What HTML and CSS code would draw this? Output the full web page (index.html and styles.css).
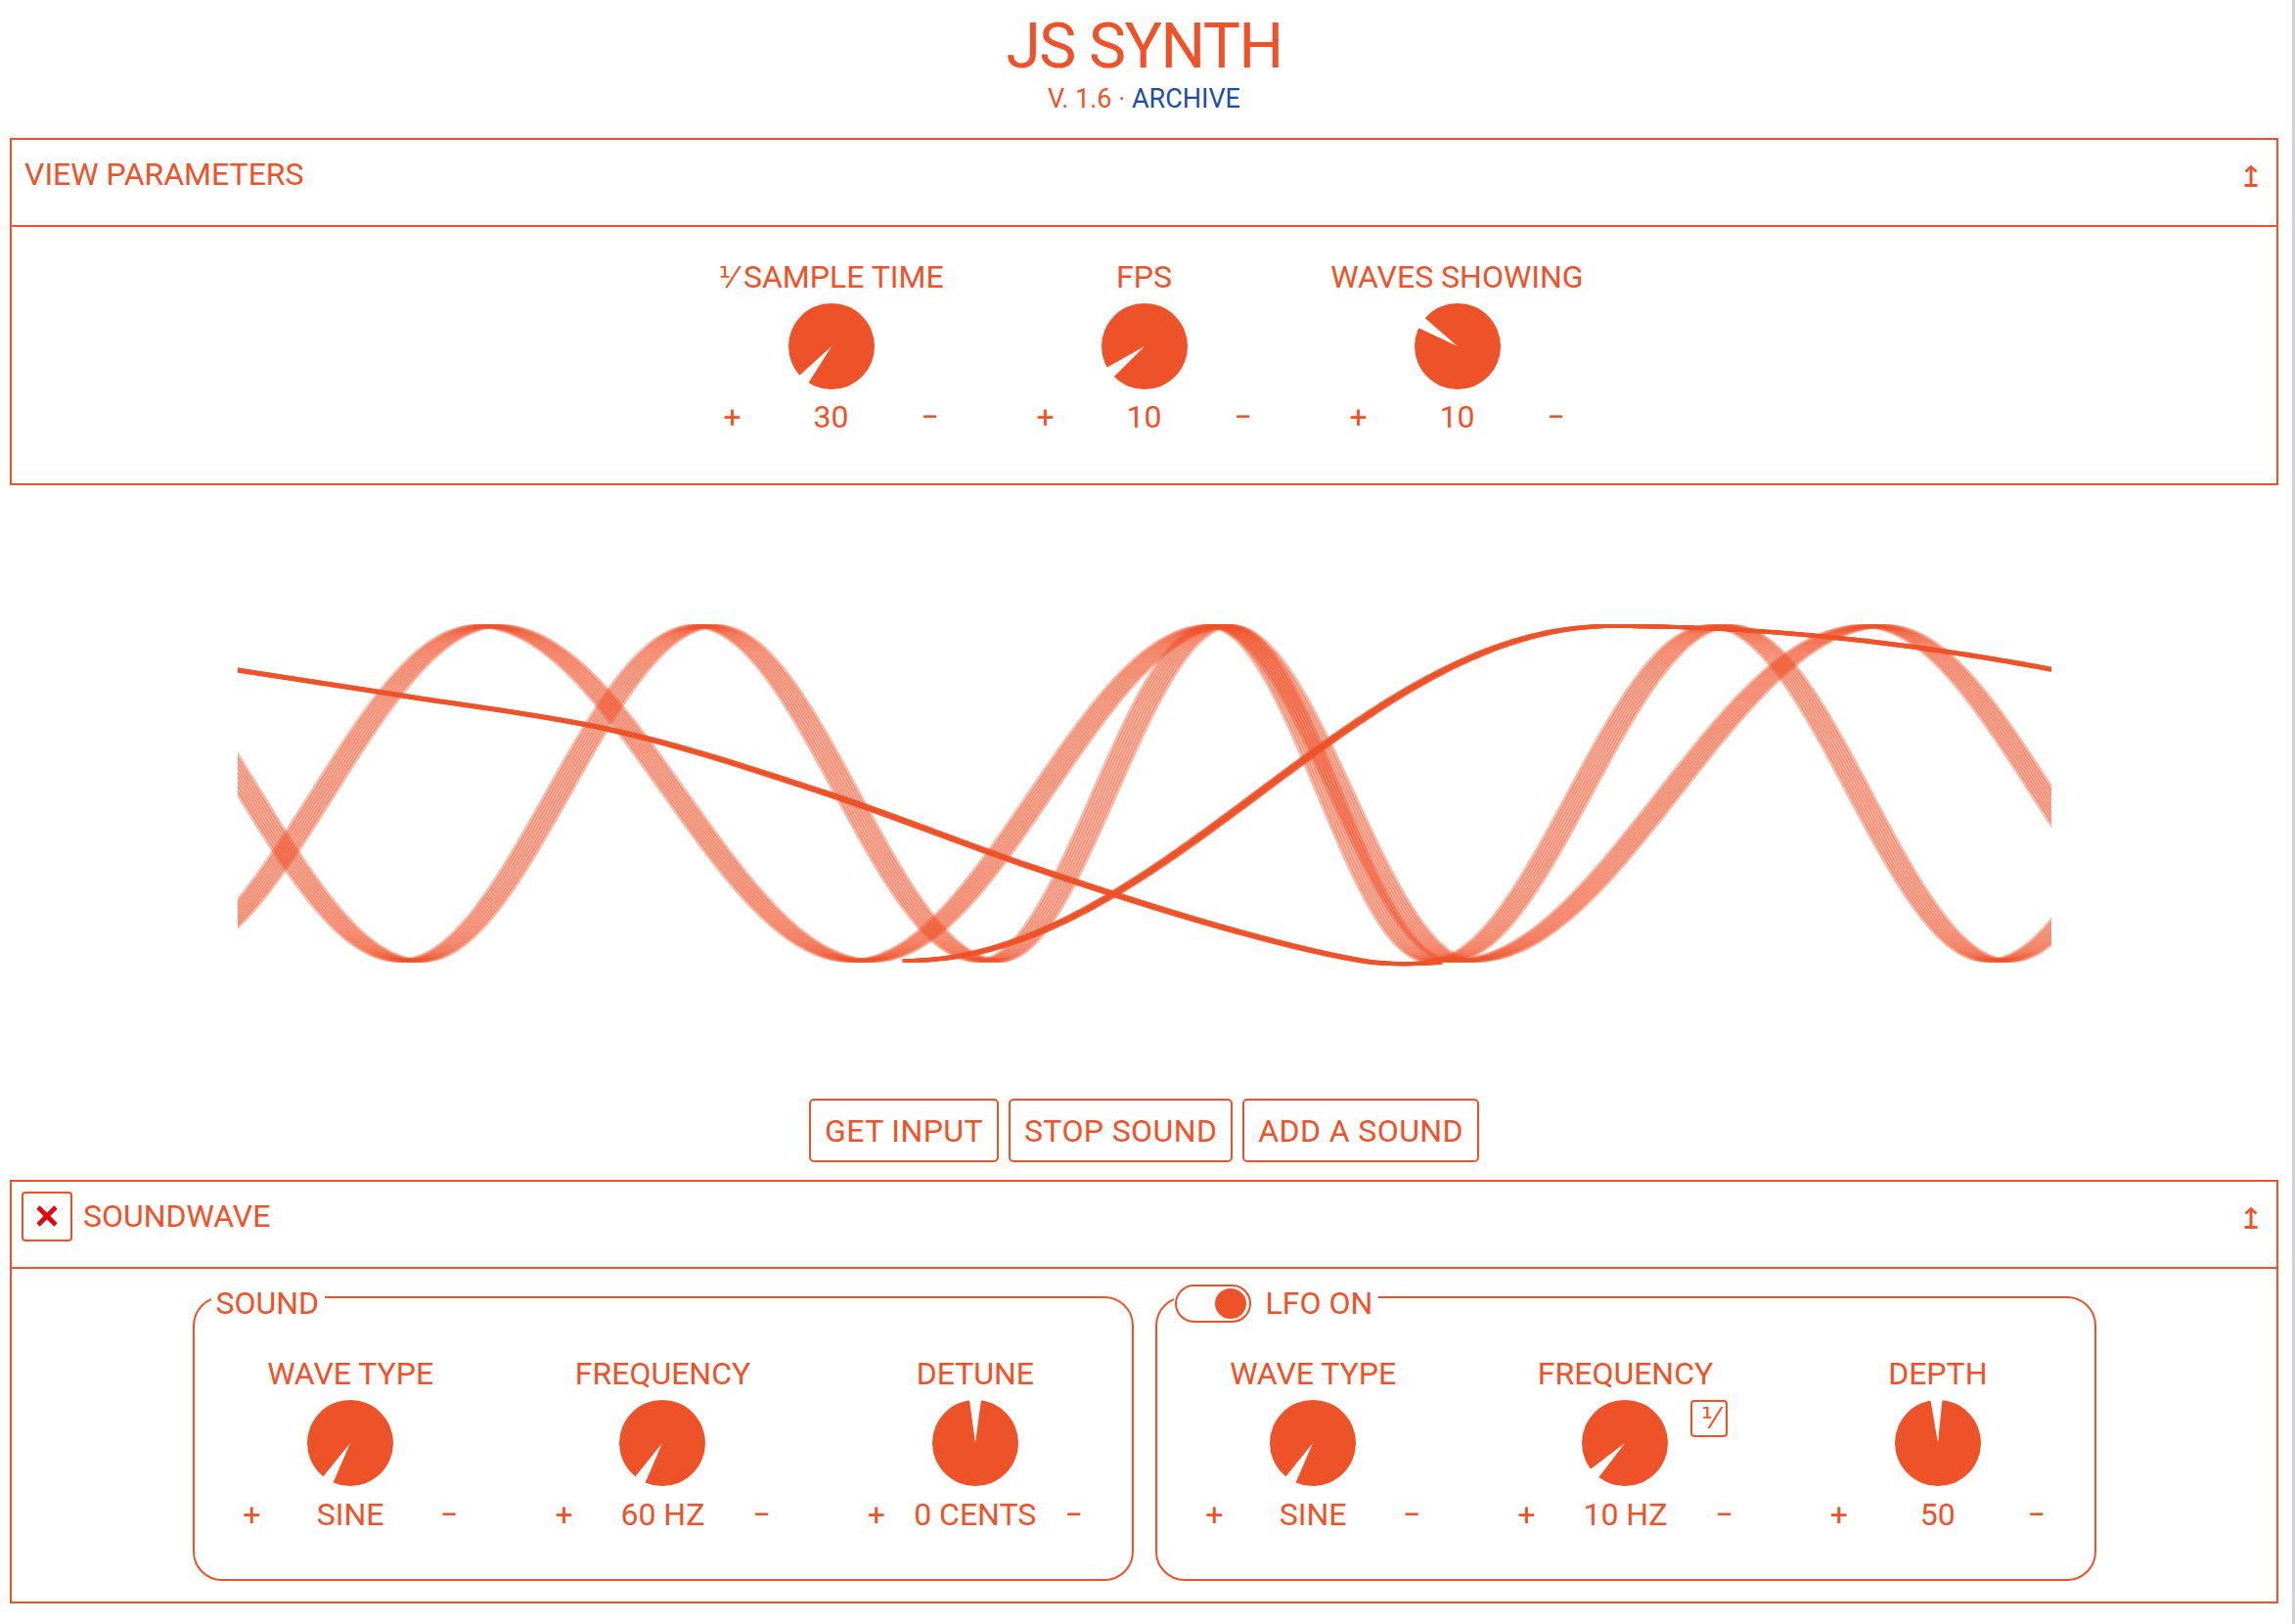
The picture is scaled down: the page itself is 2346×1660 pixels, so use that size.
FILE: index.html
```html
<!DOCTYPE html>
<html lang="en">
<head>
<meta charset="utf-8">
<title>JS Synth</title>
<link rel="stylesheet" href="styles.css">
</head>
<body>
<div class="scrollbar"></div>
<header class="top">
  <h1 class="title">JS SYNTH</h1>
  <p class="sub">V. 1.6 · <a class="link" href="#">ARCHIVE</a></p>
</header>

<section class="panel">
  <div class="panel-head">
    <h2 class="panel-title">VIEW PARAMETERS</h2>
    <svg class="collapse" width="14" height="22" viewBox="0 0 14 22"><path d="M1.5 6.5 L7 1.5 L12.5 6.5" fill="none" stroke="#EE5229" stroke-width="2.6"/><path d="M7 2 V19" stroke="#EE5229" stroke-width="3"/><path d="M0.5 20.5 H13.5" stroke="#EE5229" stroke-width="3"/></svg>
  </div>
  <div class="panel-body view-body">
    <div class="knobs">
      <div class="ctl">
        <div class="lbl"><span class="frac">⅟</span> SAMPLE TIME</div>
        <svg class="knob" width="88" height="88" viewBox="0 0 88 88"><circle cx="44" cy="44" r="44" fill="#EE5229"/><g transform="rotate(130 44 44)"><polygon points="44,44 110,35 110,53" fill="#fff"/></g></svg>
        <div class="row"><span>+</span><span>30</span><span>−</span></div>
      </div>
      <div class="ctl">
        <div class="lbl">FPS</div>
        <svg class="knob" width="88" height="88" viewBox="0 0 88 88"><circle cx="44" cy="44" r="44" fill="#EE5229"/><g transform="rotate(143 44 44)"><polygon points="44,44 110,35 110,53" fill="#fff"/></g></svg>
        <div class="row"><span>+</span><span>10</span><span>−</span></div>
      </div>
      <div class="ctl">
        <div class="lbl">WAVES SHOWING</div>
        <svg class="knob" width="88" height="88" viewBox="0 0 88 88"><circle cx="44" cy="44" r="44" fill="#EE5229"/><g transform="rotate(213 44 44)"><polygon points="44,44 110,35 110,53" fill="#fff"/></g></svg>
        <div class="row"><span>+</span><span>10</span><span>−</span></div>
      </div>
    </div>
  </div>
</section>

<div class="scope">
  <svg id="scope" class="scope-svg" width="1854" height="627" viewBox="242 495 1854 627"></svg>
</div>

<div class="actions">
  <button class="btn">GET INPUT</button>
  <button class="btn">STOP SOUND</button>
  <button class="btn">ADD A SOUND</button>
</div>

<section class="panel">
  <div class="panel-head">
    <button class="close" aria-label="remove"><svg width="22" height="22" viewBox="0 0 22 22"><path d="M2 2 L20 20 M20 2 L2 20" stroke="#E5000D" stroke-width="4.6"/></svg></button>
    <h2 class="panel-title">SOUNDWAVE</h2>
    <svg class="collapse" width="14" height="22" viewBox="0 0 14 22"><path d="M1.5 6.5 L7 1.5 L12.5 6.5" fill="none" stroke="#EE5229" stroke-width="2.6"/><path d="M7 2 V19" stroke="#EE5229" stroke-width="3"/><path d="M0.5 20.5 H13.5" stroke="#EE5229" stroke-width="3"/></svg>
  </div>
  <div class="panel-body sound-body">
    <fieldset class="group">
      <legend class="legend legend-sound"><span class="legend-text">SOUND</span></legend>
      <div class="trio">
        <div class="ctl">
          <div class="lbl">WAVE TYPE</div>
          <svg class="knob" width="88" height="88" viewBox="0 0 88 88"><circle cx="44" cy="44" r="44" fill="#EE5229"/><g transform="rotate(121 44 44)"><polygon points="44,44 110,35 110,53" fill="#fff"/></g></svg>
          <div class="row"><span>+</span><span>SINE</span><span>−</span></div>
        </div>
        <div class="ctl">
          <div class="lbl">FREQUENCY</div>
          <svg class="knob" width="88" height="88" viewBox="0 0 88 88"><circle cx="44" cy="44" r="44" fill="#EE5229"/><g transform="rotate(121 44 44)"><polygon points="44,44 110,35 110,53" fill="#fff"/></g></svg>
          <div class="row"><span>+</span><span>60 HZ</span><span>−</span></div>
        </div>
        <div class="ctl">
          <div class="lbl">DETUNE</div>
          <svg class="knob" width="88" height="88" viewBox="0 0 88 88"><circle cx="44" cy="44" r="44" fill="#EE5229"/><g transform="rotate(270 44 44)"><polygon points="44,44 110,35 110,53" fill="#fff"/></g></svg>
          <div class="row"><span>+</span><span>0 CENTS</span><span>−</span></div>
        </div>
      </div>
    </fieldset>
    <fieldset class="group">
      <legend class="legend legend-lfo"><span class="toggle"><span class="toggle-dot"></span></span><span class="legend-text">LFO ON</span></legend>
      <div class="trio">
        <div class="ctl">
          <div class="lbl">WAVE TYPE</div>
          <svg class="knob" width="88" height="88" viewBox="0 0 88 88"><circle cx="44" cy="44" r="44" fill="#EE5229"/><g transform="rotate(121 44 44)"><polygon points="44,44 110,35 110,53" fill="#fff"/></g></svg>
          <div class="row"><span>+</span><span>SINE</span><span>−</span></div>
        </div>
        <div class="ctl">
          <div class="lbl">FREQUENCY</div>
          <div class="knob-wrap">
            <svg class="knob" width="88" height="88" viewBox="0 0 88 88"><circle cx="44" cy="44" r="44" fill="#EE5229"/><g transform="rotate(135 44 44)"><polygon points="44,44 110,35 110,53" fill="#fff"/></g></svg>
            <button class="inv">⅟</button>
          </div>
          <div class="row"><span>+</span><span>10 HZ</span><span>−</span></div>
        </div>
        <div class="ctl">
          <div class="lbl">DEPTH</div>
          <svg class="knob" width="88" height="88" viewBox="0 0 88 88"><circle cx="44" cy="44" r="44" fill="#EE5229"/><g transform="rotate(268 44 44)"><polygon points="44,44 110,35 110,53" fill="#fff"/></g></svg>
          <div class="row"><span>+</span><span>50</span><span>−</span></div>
        </div>
      </div>
    </fieldset>
  </div>
</section>
<script src="script.js"></script>
</body>
</html>
```

FILE: styles.css
```css
html {
  overflow: hidden;
}
body {
  margin: 0;
  padding: 0 17px 0 10px;
  background: #fff;
  color: #EE5229;
  font-family: Roboto, "Liberation Sans", "DejaVu Sans", sans-serif;
  font-size: 32px;
  line-height: 38px;
}
.scrollbar {
  position: fixed;
  top: 0;
  right: 0;
  bottom: 0;
  width: 3px;
  background: #d2d2d6;
}
.top {
  text-align: center;
}
.title {
  margin: 16px 0 0;
  font-size: 64px;
  line-height: 64px;
  font-weight: 400;
  letter-spacing: -1.5px;
  color: #EF5229;
}
.sub {
  margin: 5px 0 0;
  font-size: 27px;
  line-height: 32px;
}
.link {
  color: #1C4EA0;
  text-decoration: none;
}
.panel {
  border: 2px solid #EE5229;
  margin-top: 24px;
}
.panel-head {
  height: 89px;
  box-sizing: border-box;
  padding: 0 19px 17px 13px;
  display: flex;
  align-items: center;
  border-bottom: 2px solid #EE5229;
}
.panel-title {
  margin: 0;
  font-size: 32px;
  font-weight: 400;
  line-height: 38px;
  flex: 1;
}
.collapse {
  display: block;
  margin-top: 4px;
}
.close {
  width: 52px;
  height: 51px;
  margin: 0 11px 0 -3px;
  padding: 0;
  border: 2px solid #EE5229;
  border-radius: 4px;
  background: #fff;
  display: flex;
  align-items: center;
  justify-content: center;
}
.close svg {
  display: block;
}
.view-body {
  padding: 32px 0 49px;
}
.knobs {
  display: flex;
  justify-content: center;
}
.ctl {
  width: 320px;
  display: flex;
  flex-direction: column;
  align-items: center;
}
.lbl {
  white-space: nowrap;
  height: 38px;
}
.frac {
  font-family: "DejaVu Sans", sans-serif;
  font-size: 31px;
}
.knob {
  display: block;
  margin-top: 8px;
}
.knob-wrap {
  position: relative;
  width: 88px;
  margin-top: 8px;
}
.knob-wrap .knob {
  margin-top: 0;
}
.inv {
  position: absolute;
  left: 111px;
  top: 0;
  width: 38px;
  height: 38px;
  padding: 0;
  border: 2px solid #EE5229;
  border-radius: 4px;
  background: #fff;
  color: #EE5229;
  font-family: "DejaVu Sans", sans-serif;
  font-size: 30px;
  line-height: 32px;
}
.row {
  width: 220px;
  margin-top: 9px;
  display: flex;
  justify-content: space-between;
  white-space: nowrap;
}
.scope {
  height: 627px;
  display: flex;
  justify-content: center;
}
.scope-svg {
  display: block;
}
.actions {
  display: flex;
  justify-content: center;
  gap: 10px;
  margin-bottom: 18px;
}
.actions + .panel {
  margin-top: 0;
}
.btn {
  font-family: inherit;
  font-size: 32px;
  line-height: 38px;
  letter-spacing: 0.4px;
  color: #EE5229;
  background: #fff;
  border: 2px solid #EE5229;
  border-radius: 5px;
  padding: 11.5px 14px;
}
.sound-body {
  padding: 5px 0 21px;
  display: flex;
  justify-content: center;
  gap: 22px;
}
.group {
  width: 962px;
  box-sizing: border-box;
  margin: 0;
  padding: 35px 0 47px;
  border: 2px solid #EE5229;
  border-radius: 30px;
  min-inline-size: 0;
}
.legend {
  height: 48px;
  box-sizing: border-box;
  margin-left: 17px;
  padding: 12px 6px 0 5px;
  display: flex;
  align-items: center;
}
.legend-lfo {
  padding-left: 1px;
}
.legend-text {
  line-height: 36px;
  height: 36px;
  display: block;
}
.toggle {
  width: 78px;
  height: 39px;
  box-sizing: border-box;
  border: 2px solid #EE5229;
  border-radius: 20px;
  margin-right: 15px;
  display: flex;
  align-items: center;
  justify-content: flex-end;
  padding-right: 3px;
}
.toggle-dot {
  width: 32px;
  height: 31px;
  border-radius: 50%;
  background: #EE5229;
}
.trio {
  display: grid;
  grid-template-columns: repeat(3, 1fr);
}
.trio .ctl {
  width: auto;
}
.trio .row {
  margin-top: 10px;
}
```

FILE: script.js
```js
(function () {
  var NS = 'http://www.w3.org/2000/svg';
  var svg = document.getElementById('scope');
  var TOP = 639, BOT = 981;
  function yAt(ext, x) {
    var i = 0;
    while (i < ext.length - 2 && x > ext[i + 1][0]) i++;
    var a = ext[i], b = ext[i + 1];
    var f = (x - a[0]) / (b[0] - a[0]);
    var k = (1 - Math.cos(Math.PI * f)) / 2;
    if (a[1] === 'T') return TOP + (BOT - TOP) * k;
    return BOT - (BOT - TOP) * k;
  }
  function extPath(ext, x0, x1) {
    var d = '';
    for (var x = x0; x <= x1; x += 4) {
      d += (d ? ' L' : 'M') + x + ' ' + yAt(ext, x).toFixed(1);
    }
    return d;
  }
  function splinePath(pts) {
    var d = 'M' + pts[0][0] + ' ' + pts[0][1];
    for (var i = 0; i < pts.length - 1; i++) {
      var p0 = pts[i - 1] || pts[i], p1 = pts[i], p2 = pts[i + 1], p3 = pts[i + 2] || pts[i + 1];
      var c1x = p1[0] + (p2[0] - p0[0]) / 6, c1y = p1[1] + (p2[1] - p0[1]) / 6;
      var c2x = p2[0] - (p3[0] - p1[0]) / 6, c2y = p2[1] - (p3[1] - p1[1]) / 6;
      d += ' C' + c1x.toFixed(1) + ' ' + c1y.toFixed(1) + ' ' + c2x.toFixed(1) + ' ' + c2y.toFixed(1) + ' ' + p2[0] + ' ' + p2[1];
    }
    return d;
  }
  function draw(d, copies, spread, width, opacity) {
    for (var i = 0; i < copies; i++) {
      var p = document.createElementNS(NS, 'path');
      var dx = -spread / 2 + spread * i / (copies - 1);
      p.setAttribute('d', d);
      p.setAttribute('transform', 'translate(' + dx.toFixed(2) + ' 0)');
      p.setAttribute('fill', 'none');
      p.setAttribute('stroke', '#EE5229');
      p.setAttribute('stroke-width', width);
      p.setAttribute('stroke-opacity', opacity);
      svg.appendChild(p);
    }
  }
  var P = [[89, 'T'], [419, 'B'], [720, 'T'], [1010, 'B'], [1246, 'T'], [1470, 'B'], [1758, 'T'], [2042, 'B'], [2334, 'T']];
  var Q = [[-170, 'T'], [160, 'B'], [498, 'T'], [880, 'B'], [1246, 'T'], [1495, 'B'], [1915, 'T'], [2260, 'B']];
  var L2 = [[-600, 'T'], [925, 'B'], [1646, 'T'], [3569, 'B']];
  var L1 = [[200, 677], [242, 684], [410, 710], [628, 746], [838, 808], [1047, 883], [1242, 945], [1391, 981], [1470, 983]];
  draw(extPath(P, 200, 2140), 9, 24, 4, 0.42);
  draw(extPath(Q, 200, 2140), 9, 24, 4, 0.42);
  draw(splinePath(L1), 7, 8, 4, 0.7);
  draw(extPath(L2, 925, 2140), 7, 8, 4, 0.7);
})();
```
